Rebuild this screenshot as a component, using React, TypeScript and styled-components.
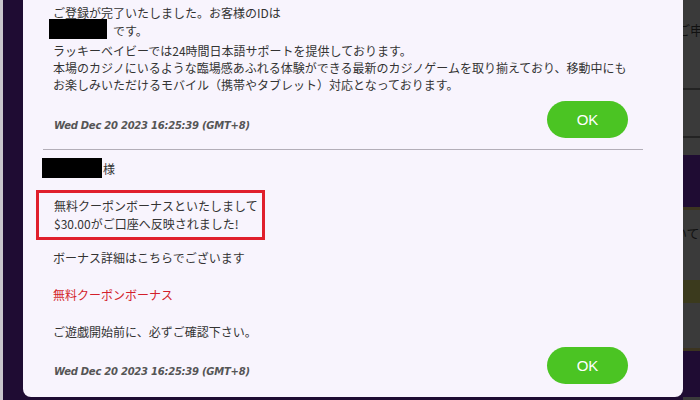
import React from "react";
import styled, { createGlobalStyle } from "styled-components";

const Global = createGlobalStyle`
  html, body { margin: 0; padding: 0; }
  body {
    width: 700px;
    height: 400px;
    overflow: hidden;
    background: #1f0c33;
    font-family: "Noto Sans CJK JP", "Noto Sans", sans-serif;
  }
`;

const Page = styled.div`
  display: flex;
  width: 700px;
  height: 400px;
  overflow: hidden;
`;

const LeftRail = styled.div`
  width: 20px;
  flex: none;
  border-left: 3px solid #c9c6cc;
  background: #1f0c33;
`;

const Panel = styled.div`
  width: 660px;
  height: 397px;
  flex: none;
  box-sizing: border-box;
  background: #f8f4fd;
  border-radius: 0 0 8px 8px;
  padding: 0 40px 0 20px;
  color: #333;
  font-size: 12px;
`;

const Message = styled.div<{ $pt: number }>`
  padding-top: ${(p) => p.$pt}px;
`;

const Divider = styled.hr`
  margin: 11px 0 0;
  border: none;
  border-top: 1px solid #b3aeb8;
  height: 0;
`;

const Body = styled.div`
  padding-left: 10px;
`;

const Line = styled.div<{ $lh?: number; $mt?: number; $red?: boolean }>`
  line-height: ${(p) => p.$lh ?? 17}px;
  margin-top: ${(p) => p.$mt ?? 0}px;
  white-space: nowrap;
  color: ${(p) => (p.$red ? "#d31f2b" : "inherit")};
`;

const IdRow = styled.div<{ $mt?: number }>`
  display: flex;
  align-items: flex-end;
  height: 20px;
  margin-top: ${(p) => p.$mt ?? 0}px;
  line-height: 16px;
`;

const NameRow = styled.div`
  display: flex;
  align-items: center;
  height: 20px;
`;

const Redacted = styled.span<{ $w: number; $ml: number }>`
  display: inline-block;
  width: ${(p) => p.$w}px;
  height: 20px;
  background: #000;
  margin-left: ${(p) => p.$ml}px;
  margin-right: ${(p) => (p.$ml < -5 ? 1 : 6)}px;
  flex: none;
`;

const Highlight = styled.div`
  width: 229px;
  box-sizing: border-box;
  margin: 12px 0 0 -17px;
  border: 3px solid #e01f2c;
  padding: 4px 0 4px 15px;
  line-height: 18px;
  white-space: nowrap;
`;

const Footer = styled.div<{ $mt: number }>`
  display: flex;
  justify-content: space-between;
  align-items: flex-end;
  margin-top: ${(p) => p.$mt}px;
  padding: 0 15px 0 11px;
`;

const Stamp = styled.div`
  font-family: "DejaVu Sans", Verdana, sans-serif;
  font-style: italic;
  font-weight: bold;
  font-size: 10px;
  letter-spacing: -0.25px;
  line-height: 14px;
  color: #555;
  margin-bottom: 5px;
`;

const OkButton = styled.button`
  width: 81px;
  height: 37px;
  border: none;
  border-radius: 19px;
  background: #4bc423;
  color: #fff;
  font-family: "Liberation Sans", Arial, sans-serif;
  font-size: 15px;
  padding: 0;
  cursor: pointer;
`;

const RightRail = styled.div`
  flex: 1;
  display: flex;
  flex-direction: column;
  overflow: hidden;
  background: #3a3a3a;
`;

const Band = styled.div<{ $h: number; $bg?: string }>`
  height: ${(p) => p.$h}px;
  flex: none;
  background: ${(p) => p.$bg ?? "#3a3a3a"};
  overflow: hidden;
  white-space: nowrap;
`;

const RailText = styled.div<{ $mt: number; $ml: number }>`
  margin-top: ${(p) => p.$mt}px;
  margin-left: ${(p) => p.$ml}px;
  font-size: 13px;
  line-height: 16px;
  color: #111;
`;

export default function App() {
  const stamp = "Wed Dec 20 2023 16:25:39 (GMT+8)";
  return (
    <>
      <Global />
      <Page>
        <LeftRail />
        <Panel>
          <Message $pt={7}>
            <Body>
              <Line $lh={12}>ご登録が完了いたしました。お客様のIDは</Line>
              <IdRow>
                <Redacted $w={58} $ml={-4} />
                です。
              </IdRow>
              <Line $mt={3}>ラッキーベイビーでは24時間日本語サポートを提供しております。</Line>
              <Line>本場のカジノにいるような臨場感あふれる体験ができる最新のカジノゲームを取り揃えており、移動中にも</Line>
              <Line>お楽しみいただけるモバイル（携帯やタブレット）対応となっております。</Line>
            </Body>
            <Footer $mt={8}>
              <Stamp>{stamp}</Stamp>
              <OkButton>OK</OkButton>
            </Footer>
            <Divider />
          </Message>
          <Message $pt={8}>
            <Body>
              <NameRow>
                <Redacted $w={60} $ml={-11} />
                様
              </NameRow>
              <Highlight>
                無料クーポンボーナスといたしまして
                <br />
                $30.00がご口座へ反映されました!
              </Highlight>
              <Line $lh={18} $mt={9}>ボーナス詳細はこちらでございます</Line>
              <Line $lh={18} $mt={19} $red>無料クーポンボーナス</Line>
              <Line $lh={18} $mt={19}>ご遊戯開始前に、必ずご確認下さい。</Line>
            </Body>
            <Footer $mt={6}>
              <Stamp>{stamp}</Stamp>
              <OkButton>OK</OkButton>
            </Footer>
          </Message>
        </Panel>
        <RightRail>
          <Band $h={88}>
            <RailText $mt={22} $ml={-6}>ご申請</RailText>
          </Band>
          <Band $h={2} $bg="#232323" />
          <Band $h={46} />
          <Band $h={2} $bg="#232323" />
          <Band $h={17} />
          <Band $h={52} $bg="#1f0c33" />
          <Band $h={3} $bg="#3b3420" />
          <Band $h={70}>
            <RailText $mt={15} $ml={-9}>いて</RailText>
          </Band>
          <Band $h={23} $bg="#3b3a1d" />
          <Band $h={45} />
          <Band $h={3} $bg="#3b3420" />
          <Band $h={46} $bg="#1f0c33" />
          <Band $h={3} />
        </RightRail>
      </Page>
    </>
  );
}
